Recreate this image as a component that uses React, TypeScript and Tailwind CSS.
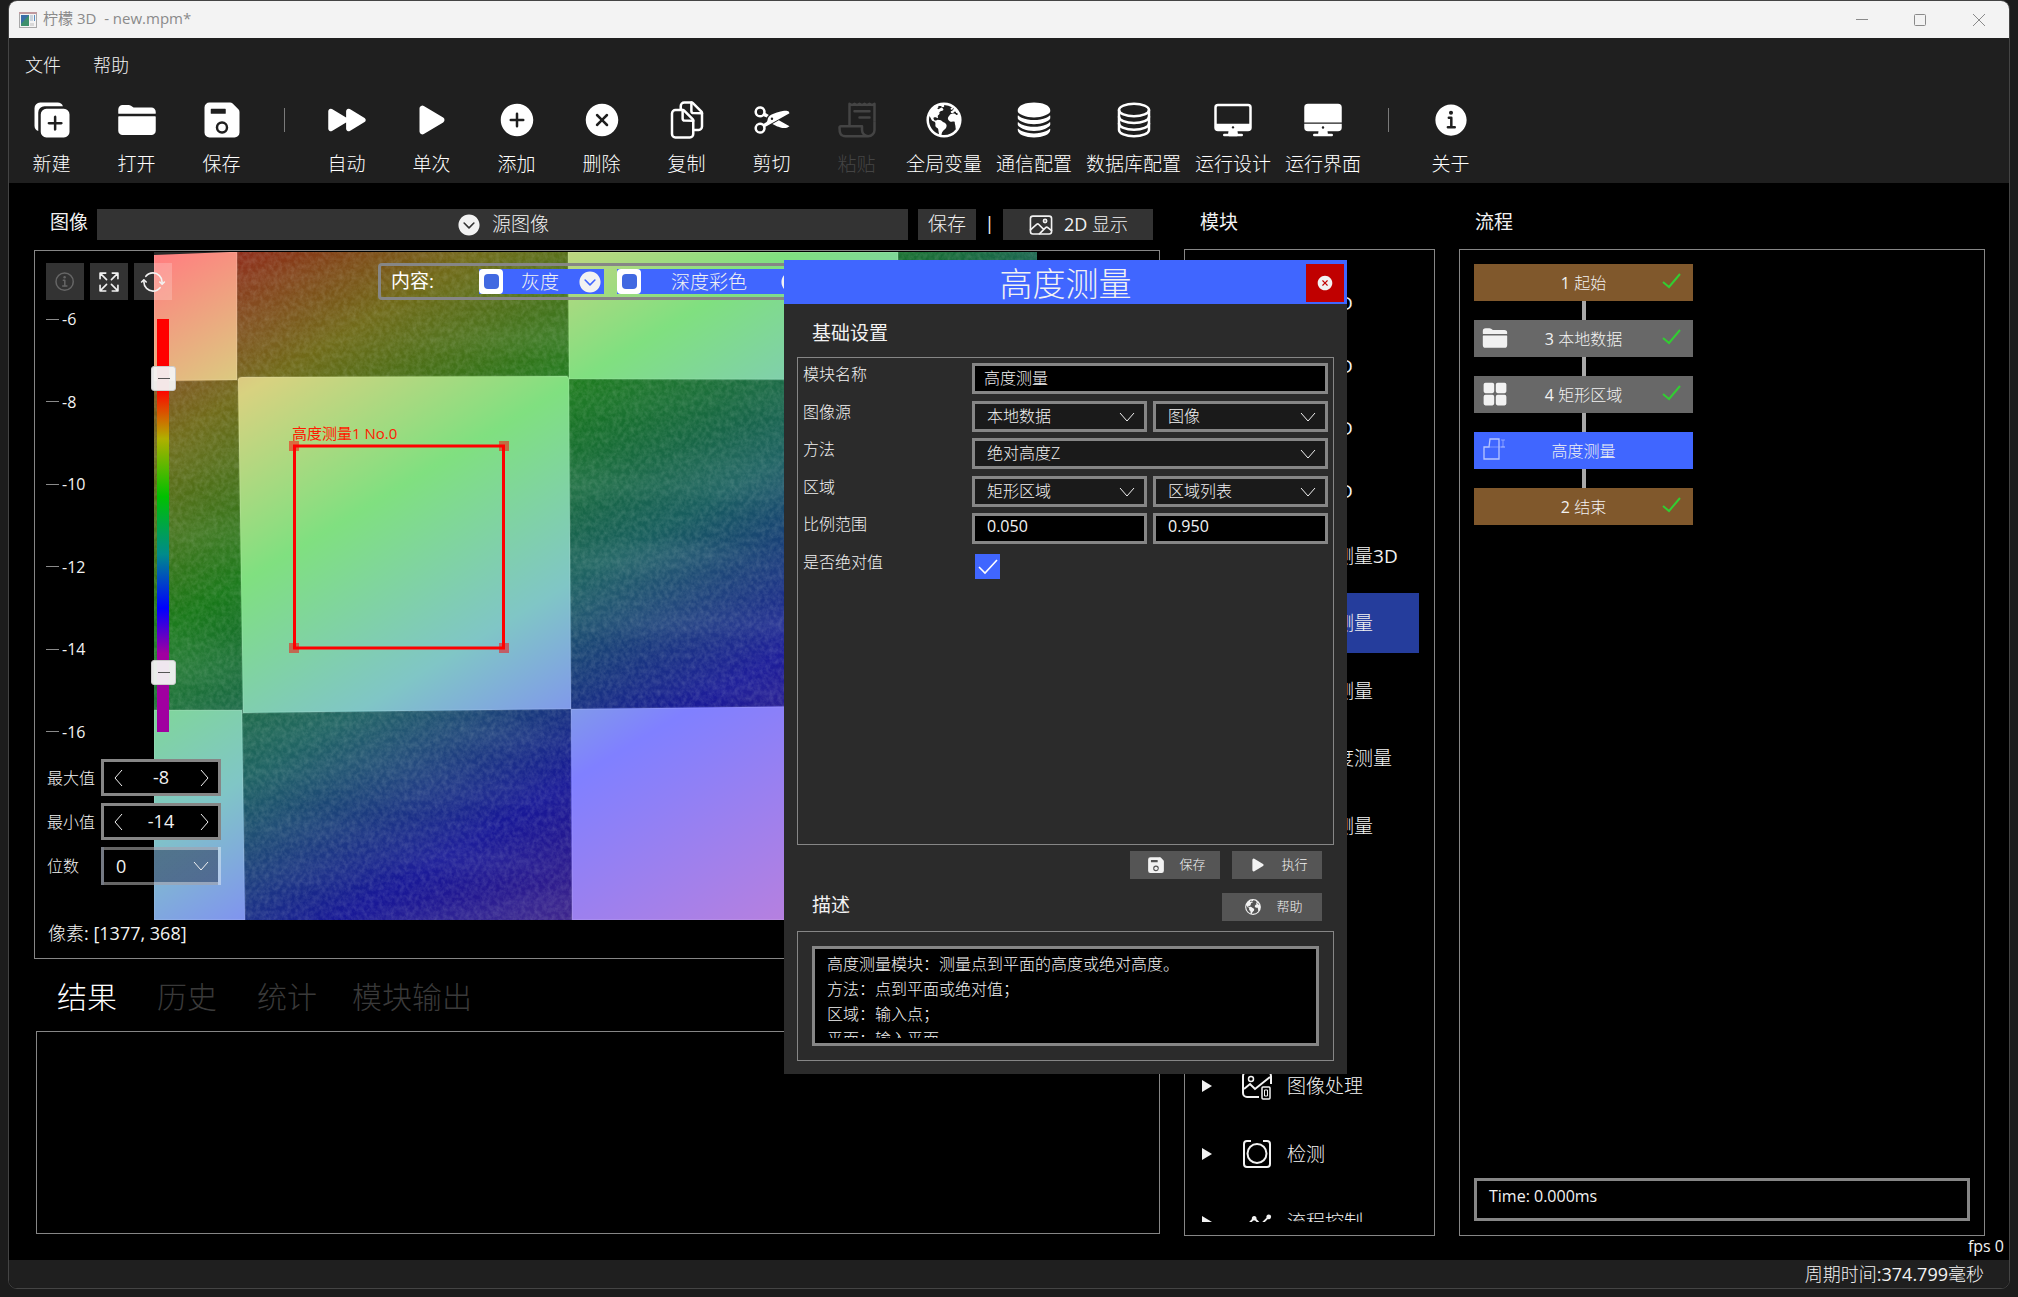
import { ReactNode, useState } from 'react'
import { IconType } from 'react-icons'
import {
  IoAddCircle,
  IoAnalytics,
  IoChevronDownCircle,
  IoCloseCircle,
  IoCut,
  IoDesktop,
  IoDesktopOutline,
  IoDocumentsOutline,
  IoDuplicate,
  IoEarth,
  IoExpandOutline,
  IoFolder,
  IoGrid,
  IoImageOutline,
  IoInformationCircle,
  IoInformationCircleOutline,
  IoPlay,
  IoPlayForward,
  IoReceiptOutline,
  IoSave,
  IoServer,
  IoServerOutline,
  IoSyncOutline
} from 'react-icons/io5'

type Tool = { label: string; icon: IconType; disabled?: boolean }

const toolGroups: Tool[][] = [
  [
    { label: '新建', icon: IoDuplicate },
    { label: '打开', icon: IoFolder },
    { label: '保存', icon: IoSave }
  ],
  [
    { label: '自动', icon: IoPlayForward },
    { label: '单次', icon: IoPlay },
    { label: '添加', icon: IoAddCircle },
    { label: '删除', icon: IoCloseCircle },
    { label: '复制', icon: IoDocumentsOutline },
    { label: '剪切', icon: IoCut },
    { label: '粘贴', icon: IoReceiptOutline, disabled: true },
    { label: '全局变量', icon: IoEarth },
    { label: '通信配置', icon: IoServer },
    { label: '数据库配置', icon: IoServerOutline },
    { label: '运行设计', icon: IoDesktopOutline },
    { label: '运行界面', icon: IoDesktop }
  ],
  [{ label: '关于', icon: IoInformationCircle }]
]

// Chinese runs are light, Latin runs and digits keep the normal weight
const MixedText = ({ text }: { text: string }) => (
  <span className="whitespace-pre">
    {text.split(/([\x20-\x7e]+)/).map((run, i) => (
      <span key={i} className={i % 2 ? 'font-normal' : 'font-light'}>{run}</span>
    ))}
  </span>
)

const TitleBar = () => (
  <header className="flex h-[37px] shrink-0 items-center bg-[#f3f3f3] pl-[10px] text-[#8a8a8a]">
    <svg width="18" height="16" viewBox="0 0 18 16">
      <rect x="0.5" y="0.5" width="17" height="15" fill="#f4f4f4" stroke="#a8a8a8" />
      <rect x="0" y="0" width="18" height="2" fill="#c09a9f" />
      <rect x="2" y="3" width="8" height="11" fill="#3d8f6b" />
      <path d="M2 3h8l-8 9z" fill="#3a6ea8" />
      <rect x="11" y="3" width="3" height="6" fill="#c9d3dc" />
      <rect x="15" y="3" width="1" height="6" fill="#5b8fc0" />
      <rect x="11" y="11" width="4" height="3" fill="#d8d8d8" />
    </svg>
    <h1 className="ml-[6px] flex-1 pb-[3px] text-[15px] whitespace-pre">柠檬 3D  - new.mpm*</h1>
    <div className="flex pr-px">
      <button aria-label="最小化" className="flex h-[37px] w-[59px] items-center justify-center">
        <svg width="12" height="12" stroke="currentColor"><path d="M0 5.5h12" /></svg>
      </button>
      <button aria-label="最大化" className="flex h-[37px] w-[58px] items-center justify-center">
        <svg width="12" height="12" fill="none" stroke="currentColor">
          <rect x="0.5" y="0.5" width="11" height="11" rx="1" />
        </svg>
      </button>
      <button aria-label="关闭窗口" className="flex h-[37px] w-[59px] items-center justify-center">
        <svg width="12" height="12" stroke="currentColor"><path d="M0 0l12 12M12 0L0 12" /></svg>
      </button>
    </div>
  </header>
)

const ToolButton = ({ label, icon: Icon, disabled }: Tool) => (
  <button
    disabled={disabled}
    className="flex min-w-[85px] flex-col items-center gap-3 px-[7px] text-white disabled:text-[#444]"
  >
    <Icon size={40} />
    <span className="text-[19px] leading-6 font-light">{label}</span>
  </button>
)

const Toolbar = () => (
  <div className="shrink-0 bg-[#1f1f1f] pt-[15px] pb-[7px]">
    <nav className="flex gap-8 px-4 text-[18px] leading-6 font-light">
      <button>文件</button>
      <button>帮助</button>
    </nav>
    <div className="mt-[23px] flex">
      {toolGroups.map((group, i) => (
        <div key={i} className="flex">
          {i > 0 && (
            <div className="w-10">
              <div className="mx-auto mt-2 h-6 w-px bg-[#7a7a7a]"></div>
            </div>
          )}
          {group.map((tool) => (
            <ToolButton key={tool.label} {...tool} />
          ))}
        </div>
      ))}
    </div>
  </div>
)

// Depth map of the checker board: one colour ramp, shaded dark and light per cell
const DepthMap = () => (
  <svg
    className="absolute top-px left-[119px] h-[668px] w-[883px]"
    viewBox="154 251 883 668"
    preserveAspectRatio="none"
  >
    <defs>
      <linearGradient id="ramp" gradientUnits="userSpaceOnUse" x1="154" y1="260" x2="669" y2="1118">
        <stop offset="0" stopColor="#ff0000" />
        <stop offset="0.16" stopColor="#b0a400" />
        <stop offset="0.32" stopColor="#00c000" />
        <stop offset="0.49" stopColor="#008c8c" />
        <stop offset="0.66" stopColor="#0000ff" />
        <stop offset="1" stopColor="#a000a0" />
      </linearGradient>
      <filter id="grain" x="0" y="0" width="100%" height="100%">
        <feTurbulence type="fractalNoise" baseFrequency="0.23 0.19" numOctaves="4" seed="7" />
        <feColorMatrix values="0 0 0 0 0.8  0 0 0 0 0.9  0 0 0 0 0.8  1 0 0 0 -0.3" />
      </filter>
      <filter id="bands" x="0" y="0" width="100%" height="100%">
        <feTurbulence type="fractalNoise" baseFrequency="0.004 0.02" numOctaves="2" seed="3" />
        <feColorMatrix values="0 0 0 0 0.7  0 0 0 0 0.85  0 0 0 0 0.8  1.4 0 0 0 -0.5" />
      </filter>
    </defs>
    <rect x="154" y="251" width="883" height="668" fill="url(#ramp)" />
    <rect x="154" y="251" width="883" height="668" fill="#303030" opacity="0.5" />
    <rect x="154" y="251" width="883" height="668" filter="url(#grain)" opacity="0.25" />
    <rect x="154" y="251" width="883" height="668" filter="url(#bands)" opacity="0.15" />
    <g stroke="#ffffff" strokeOpacity="0.1" strokeWidth="2">
      <path d="M154 251H237V379L154 380Z" fill="url(#ramp)" />
      <path d="M568 251H898V379L569 378Z" fill="url(#ramp)" />
      <path d="M238 378Q239 376 242 376L567 375Q569 376 569 378L571 708L243 712Z" fill="url(#ramp)" />
      <path d="M154 709L242 709L245 919H154Z" fill="url(#ramp)" />
      <path d="M571 708L900 704V919H572Z" fill="url(#ramp)" />
    </g>
    <g fill="#ffffff" fillOpacity="0.5">
      <path d="M154 251H237V379L154 380Z" />
      <path d="M568 251H898V379L569 378Z" />
      <path d="M238 378Q239 376 242 376L567 375Q569 376 569 378L571 708L243 712Z" />
      <path d="M154 709L242 709L245 919H154Z" />
      <path d="M571 708L900 704V919H572Z" />
    </g>
    <path d="M154 251H230L154 254Z" fill="#282828" />
    <g fill="none">
      <rect x="294.500" y="445" width="209" height="202" stroke="#ff0000" strokeWidth="3" />
      <g fill="#ff0000" fillOpacity="0.5">
        <rect x="289" y="440" width="10" height="10" />
        <rect x="499" y="440" width="10" height="10" />
        <rect x="289" y="642" width="10" height="10" />
        <rect x="499" y="642" width="10" height="10" />
      </g>
    </g>
    <text x="292" y="438" fill="#ff1a00" fontSize="15">高度测量1 No.0</text>
  </svg>
)

const Chevron = ({ d, w, h }: { d: string; w: number; h: number }) => (
  <svg width={w} height={h} fill="none" stroke="currentColor">
    <path d={d} />
  </svg>
)

const Stepper = ({ id, label, initial }: { id: string; label: string; initial: number }) => {
  const [value, setValue] = useState(initial)
  return (
    <div className="flex items-center">
      <label htmlFor={id} className="w-[55px] pl-px text-[16px] font-light">{label}</label>
      <div className="flex h-[37px] w-[120px] border-[3px] border-[#868686] bg-black">
        <button aria-label={label + '减'} className="w-7 pl-[10px]" onClick={() => setValue(value - 1)}>
          <Chevron d="M8 1L1 9l7 8" w={9} h={18} />
        </button>
        <input
          id={id}
          className="w-0 flex-1 text-center text-[18px]"
          value={value}
          onChange={(e) => setValue(Number(e.target.value))}
        />
        <button aria-label={label + '加'} className="w-7 pl-[10px]" onClick={() => setValue(value + 1)}>
          <Chevron d="M1 1l7 8-7 8" w={9} h={18} />
        </button>
      </div>
    </div>
  )
}

const thumb =
  'absolute top-0 left-0 h-full w-full appearance-none bg-transparent pointer-events-none [writing-mode:vertical-lr] [direction:rtl] [&::-webkit-slider-thumb]:pointer-events-auto [&::-webkit-slider-thumb]:h-[25px] [&::-webkit-slider-thumb]:w-[25px] [&::-webkit-slider-thumb]:appearance-none [&::-webkit-slider-thumb]:rounded-[3px] [&::-webkit-slider-thumb]:border [&::-webkit-slider-thumb]:border-[#cccccc] [&::-webkit-slider-thumb]:bg-[#f3f3f3]/95 [&::-webkit-slider-thumb]:bg-[linear-gradient(#555,#555)] [&::-webkit-slider-thumb]:bg-[length:12px_1px] [&::-webkit-slider-thumb]:bg-center [&::-webkit-slider-thumb]:bg-no-repeat'

const ColorScale = () => (
  <div className="flex h-[433px] w-[130px] justify-between">
    <ul className="flex flex-col justify-between">
      {['-6', '-8', '-10', '-12', '-14', '-16'].map((n) => (
        <li key={n} className="flex items-center gap-[3px] text-[16px] leading-5">
          <span className="h-px w-[13px] bg-[#8a8a8a]"></span>
          {n}
        </li>
      ))}
    </ul>
    <div className="relative my-[10px] w-[25px] pl-[6px]">
      <div className="h-full w-3 bg-[linear-gradient(#ff0000_17%,#b0b000_29%,#00c000_43%,#008b8b_57%,#0000ff_70%,#a000a0_81%)]"></div>
      <input type="range" aria-label="上限" min="-16" max="-6" step="0.1" defaultValue="-7.2" className={thumb} />
      <input type="range" aria-label="下限" min="-16" max="-6" step="0.1" defaultValue="-14.8" className={thumb} />
    </div>
  </div>
)

const LayerOption = ({ label, wide }: { label: string; wide?: boolean }) => (
  <div className="flex h-[25px] items-center bg-[#4066ff]">
    <span className="flex h-[25px] w-6 items-center justify-center rounded-[4px] bg-white">
      <input
        type="checkbox"
        aria-label={label}
        defaultChecked
        className="h-[15px] w-[15px] appearance-none rounded-[4px] bg-[#4169e1]"
      />
    </span>
    <button className={wide ? 'flex w-[165px] items-center justify-between pr-px pl-[30px]' : 'flex w-[101px] items-center justify-between pr-px pl-[18px]'}>
      <span className="text-[19px] leading-6 font-light">{label}</span>
      <IoChevronDownCircle size={26} />
    </button>
  </div>
)

const ImagePanel = () => (
  <section className="relative min-h-[700px] flex-1 overflow-hidden border border-[#868686]">
    <DepthMap />
    <div className="relative pt-3 pl-[11px]">
      <div className="flex h-[37px]">
        <div className="flex w-[332px] gap-[6px]">
          <button aria-label="信息" disabled className="flex w-[38px] items-center justify-center bg-white/20 text-[#666]">
            <IoInformationCircleOutline size={24} />
          </button>
          <button aria-label="适应窗口" className="flex w-[38px] items-center justify-center bg-white/20">
            <IoExpandOutline size={26} />
          </button>
          <button aria-label="刷新" className="flex w-[38px] items-center justify-center bg-white/20">
            <IoSyncOutline size={26} />
          </button>
        </div>
        <div className="flex items-center rounded-[4px] border-[3px] border-[#868686] pr-3 pl-[10px]">
          <span className="w-[88px] text-[19px] text-white">内容:</span>
          <div className="flex gap-[13px]">
            <LayerOption label="灰度" />
            <LayerOption label="深度彩色" wide />
          </div>
        </div>
      </div>
      <div className="mt-[9px]">
        <ColorScale />
      </div>
      <div className="mt-[17px] flex flex-col gap-[7px]">
        <Stepper id="max" label="最大值" initial={-8} />
        <Stepper id="min" label="最小值" initial={-14} />
        <div className="flex items-center">
          <label htmlFor="digits" className="w-[55px] pl-px text-[16px] font-light">位数</label>
          <div className="relative">
            <select
              id="digits"
              className="h-[38px] w-[120px] appearance-none border-[3px] border-white/40 bg-white/0 bg-[linear-gradient(90deg,transparent_50px,#2c3c5a90_50px)] pl-3 text-[18px]"
            >
              <option>0</option>
            </select>
            <span className="pointer-events-none absolute top-[14px] right-3">
              <Chevron d="M1 1l7 8 7-8" w={16} h={10} />
            </span>
          </div>
        </div>
      </div>
      <p className="mt-[36px] pl-[2px] text-[18px] leading-6">
        <MixedText text="像素: [1377, 368]" />
      </p>
    </div>
  </section>
)

const ImageColumn = () => (
  <main className="flex min-w-0 flex-1 flex-col">
    <div className="flex h-[31px] pr-[7px] pl-4 text-[19px]">
      <h2 className="mr-[9px] leading-[26px]">图像</h2>
      <button className="flex flex-1 items-center justify-center gap-[10px] bg-[#333333] font-light">
        <IoChevronDownCircle size={26} />
        源图像
      </button>
      <button className="ml-[10px] w-[58px] bg-[#333333] font-light">保存</button>
      <span className="w-[27px] text-center">|</span>
      <button className="flex w-[150px] items-center justify-center gap-[10px] bg-[#333333] text-[18px]">
        <IoImageOutline size={26} />
        <MixedText text="2D 显示" />
      </button>
    </div>
    <div className="mt-[10px] flex flex-1 flex-col">
      <ImagePanel />
    </div>
    <div role="tablist" className="flex pt-[18px] pb-[14px] pl-[3px] text-[30px] leading-[40px] font-light text-[#3a3a3a]">
      <button role="tab" aria-selected="true" className="min-w-[100px] px-[15px] text-white">结果</button>
      <button role="tab" className="min-w-[100px] px-[15px]">历史</button>
      <button role="tab" className="min-w-[100px] px-[15px]">统计</button>
      <button role="tab" className="min-w-[100px] px-[15px]">模块输出</button>
    </div>
    <div className="mb-[2px] ml-[2px] h-[203px] border border-[#868686]"></div>
  </main>
)

const ImageProcessIcon = () => (
  <svg width="30" height="30" viewBox="0 0 30 30" fill="none" stroke="currentColor" strokeWidth="2">
    <path d="M17 26H5a4 4 0 0 1-4-4V5a4 4 0 0 1 4-4h20a4 4 0 0 1 4 4v8" />
    <circle cx="9" cy="8" r="2.5" strokeWidth="1.5" />
    <path d="M2 18l6-5 5 5L28 6" />
    <rect x="20" y="16" width="8" height="12" rx="1" strokeWidth="1.5" />
    <path d="M22.500 19h3v6h-3z" strokeWidth="1" />
  </svg>
)

const InspectIcon = () => (
  <svg width="30" height="30" viewBox="0 0 30 30" fill="none" stroke="currentColor" strokeWidth="2">
    <path d="M9 2H5a3 3 0 0 0-3 3v20a3 3 0 0 0 3 3h20a3 3 0 0 0 3-3V5a3 3 0 0 0-3-3h-4" />
    <circle cx="15" cy="14.500" r="9.500" />
  </svg>
)

const TreeGroup = ({ label, icon }: { label: string; icon: ReactNode }) => (
  <li className="flex h-[68px] shrink-0 items-center pl-[17px]">
    <svg width="10" height="12" fill="currentColor"><path d="M0 0l10 6-10 6z" /></svg>
    <span className="mr-[15px] ml-[30px] w-[30px]">{icon}</span>
    <span className="text-[19px] font-light">{label}</span>
  </li>
)

const surfaceModules = ['点云3D', '平面3D', '图像3D', '区域3D']
const measureModules = ['距离测量3D', '高度测量', '宽度测量', '平面度测量', '体积测量']

const ModuleColumn = () => (
  <aside className="flex w-[251px] shrink-0 flex-col">
    <h2 className="h-10 pl-4 text-[19px] leading-[26px]">模块</h2>
    <div className="h-0 flex-1 border border-[#868686] pt-[22px] pr-[15px] pb-[13px]">
      <ul className="h-full overflow-hidden">
        <li>
          <ul className="grid h-[250px] grid-rows-4 pl-[105px] text-[19px]">
            {surfaceModules.map((name) => (
              <li key={name} className="flex items-center">
                <MixedText text={name} />
              </li>
            ))}
          </ul>
        </li>
        <li>
          <ul className="grid h-[338px] grid-rows-5 items-center text-[19px]">
            {measureModules.map((name) => (
              <li
                key={name}
                className={name === '高度测量' ? 'flex h-[60px] items-center bg-[#253d9c] pl-[112px]' : 'pl-[112px]'}
              >
                <MixedText text={name} />
              </li>
            ))}
          </ul>
        </li>
        <li className="h-[192px]"></li>
        <TreeGroup label="图像处理" icon={<ImageProcessIcon />} />
        <TreeGroup label="检测" icon={<InspectIcon />} />
        <TreeGroup label="流程控制" icon={<IoAnalytics size={30} />} />
      </ul>
    </div>
  </aside>
)

const HeightIcon = () => (
  <svg width="24" height="24" viewBox="0 0 24 24" fill="none" stroke="#b7c5ff" strokeWidth="1.3">
    <path d="M2 21h15V1H8L7 9H2z" />
    <path d="M7 9h16" strokeOpacity="0.4" />
    <path d="M19 2h4M19 9h4M21 2v7" strokeWidth="1" strokeOpacity="0.6" />
  </svg>
)

const flowNodes = [
  { label: '1 起始', color: 'bg-[#80582c]', icon: null, done: true },
  { label: '3 本地数据', color: 'bg-[#686868]', icon: <IoFolder size={26} />, done: true },
  { label: '4 矩形区域', color: 'bg-[#686868]', icon: <IoGrid size={26} />, done: true },
  { label: '高度测量', color: 'bg-[#4066ff]', icon: <HeightIcon />, done: false },
  { label: '2 结束', color: 'bg-[#80582c]', icon: null, done: true }
]

const FlowColumn = () => (
  <aside className="flex w-[526px] shrink-0 flex-col">
    <h2 className="h-10 pl-4 text-[19px] leading-[26px]">流程</h2>
    <div className="flex flex-1 flex-col justify-between border border-[#868686] p-[14px]">
      <ol className="w-[219px] text-[16px]">
        {flowNodes.map((node, i) => (
          <li key={node.label}>
            {i > 0 && <div className="mx-auto h-[19px] w-1 bg-[#a9a9a9]"></div>}
            <button className={'grid h-[37px] w-full grid-cols-[42px_1fr_42px] items-center ' + node.color}>
              <span className="pb-[2px] pl-2">{node.icon}</span>
              <MixedText text={node.label} />
              <span className="pb-1">
                {node.done && (
                  <svg className="mx-auto" width="20" height="16" fill="none" stroke="#32cd32" strokeWidth="2">
                    <path d="M1 9l6 5L18 1" />
                  </svg>
                )}
              </span>
            </button>
          </li>
        ))}
      </ol>
      <output className="block h-[43px] border-[3px] border-[#868686] px-3 pt-[3px] text-[16px] leading-6">
        Time: 0.000ms
      </output>
    </div>
  </aside>
)

const fieldBox = 'h-[31px] w-full border-[3px] border-[#868686] text-[16px]'

const TextField = ({ label, value, numeric }: { label: string; value: string; numeric?: boolean }) => (
  <input
    aria-label={label}
    defaultValue={value}
    className={fieldBox + (numeric ? ' bg-black pb-[5px] pl-3' : ' bg-black pb-[3px] pl-[9px] font-light')}
  />
)

const SelectField = ({ label, value }: { label: string; value: string }) => (
  <div className="relative w-full">
    <select aria-label={label} className={fieldBox + ' appearance-none bg-[#1a1a1a] pb-[2px] pl-3 font-light'}>
      <option>{value}</option>
    </select>
    <span className="pointer-events-none absolute top-[11px] right-3">
      <Chevron d="M1 1l7 8 7-8" w={16} h={10} />
    </span>
  </div>
)

const FormRow = ({ label, children }: { label: string; children: ReactNode }) => (
  <div className="flex">
    <span className="w-[169px] shrink-0 text-[16px] leading-[22px] font-light">{label}</span>
    <div className="flex flex-1 gap-[6px]">{children}</div>
  </div>
)

const actionButton = 'flex h-7 items-center justify-center gap-[14px] bg-[#555555] pl-[3px] text-[13px] font-light'

const HeightDialog = ({ onClose }: { onClose: () => void }) => (
  <div
    role="dialog"
    aria-labelledby="dialog-title"
    className="absolute top-[259px] left-[775px] w-[563px] bg-[#2b2b2b] pb-[13px]"
  >
    <div className="grid h-[44px] grid-cols-[41px_1fr_41px] items-center bg-[#4066ff]">
      <span></span>
      <h2 id="dialog-title" className="pt-[2px] text-center text-[33px] leading-[44px] font-light">高度测量</h2>
      <button aria-label="关闭" onClick={onClose} className="flex h-[38px] w-[38px] items-center justify-center bg-[#c00000]">
        <IoCloseCircle size={18} />
      </button>
    </div>
    <div className="px-[13px]">
      <h3 className="pt-4 pl-[15px] text-[19px] leading-[26px]">基础设置</h3>
      <form className="mt-[11px] h-[488px] border border-[#868686] pt-[5px] pr-[5px] pl-[5px]">
        <div className="grid h-[225px] grid-rows-6">
          <FormRow label="模块名称">
            <TextField label="模块名称" value="高度测量" />
          </FormRow>
          <FormRow label="图像源">
            <SelectField label="图像源模块" value="本地数据" />
            <SelectField label="图像源输出" value="图像" />
          </FormRow>
          <FormRow label="方法">
            <SelectField label="方法" value="绝对高度Z" />
          </FormRow>
          <FormRow label="区域">
            <SelectField label="区域模块" value="矩形区域" />
            <SelectField label="区域输出" value="区域列表" />
          </FormRow>
          <FormRow label="比例范围">
            <TextField label="比例下限" value="0.050" numeric />
            <TextField label="比例上限" value="0.950" numeric />
          </FormRow>
          <FormRow label="是否绝对值">
            <span className="relative m-[3px] h-[25px] w-[25px]">
              <input type="checkbox" aria-label="是否绝对值" defaultChecked className="h-full w-full appearance-none bg-[#4066ff]" />
              <svg className="pointer-events-none absolute top-[5px] left-[3px]" width="20" height="16" fill="none" stroke="white" strokeWidth="1.6">
                <path d="M1 8l6 6L19 1" />
              </svg>
            </span>
          </FormRow>
        </div>
      </form>
      <div className="mt-[6px] flex justify-end gap-3 pr-3">
        <button className={actionButton + ' w-[90px]'}>
          <IoSave size={18} />
          保存
        </button>
        <button className={actionButton + ' w-[90px]'}>
          <IoPlay size={18} />
          执行
        </button>
      </div>
      <div className="mt-[14px] flex items-start justify-between pr-3 pl-[15px]">
        <h3 className="text-[19px] leading-6">描述</h3>
        <button className={actionButton + ' w-[100px]'}>
          <IoEarth size={18} />
          帮助
        </button>
      </div>
      <div className="mt-[10px] border border-[#868686] p-[14px]">
        <div className="h-[100px] border-[3px] border-[#868686] bg-black px-3 pt-[3px] pb-[5px]">
          <textarea
            aria-label="描述"
            readOnly
            className="block h-full w-full resize-none overflow-hidden text-[16px] leading-[25px] font-light"
            value={'高度测量模块：测量点到平面的高度或绝对高度。\n方法：点到平面或绝对值；\n区域：输入点；\n平面：输入平面'}
          />
        </div>
      </div>
    </div>
  </div>
)

const App = () => {
  const [dialogOpen, setDialogOpen] = useState(true)

  return (
    <div className="h-screen min-h-[1240px] bg-[#1c1c1c] px-2 pb-2 font-['Open_Sans','Noto_Sans_CJK_SC',sans-serif] text-[#f2f2f2]">
      <div className="relative flex h-full flex-col overflow-hidden rounded-[9px] border border-[#444444] bg-black">
        <TitleBar />
        <Toolbar />
        <div className="flex min-h-0 flex-1 gap-6 pt-[26px] pr-6 pl-[25px]">
          <ImageColumn />
          <ModuleColumn />
          <FlowColumn />
        </div>
        <p className="h-6 shrink-0 pr-[5px] text-right text-[16px] leading-[20px]">fps 0</p>
        <footer className="h-7 shrink-0 bg-[#1f1f1f] pr-[25px] text-right text-[18px] leading-7">
          <MixedText text="周期时间:374.799毫秒" />
        </footer>
        {dialogOpen && <HeightDialog onClose={() => setDialogOpen(false)} />}
      </div>
    </div>
  )
}

export default App
